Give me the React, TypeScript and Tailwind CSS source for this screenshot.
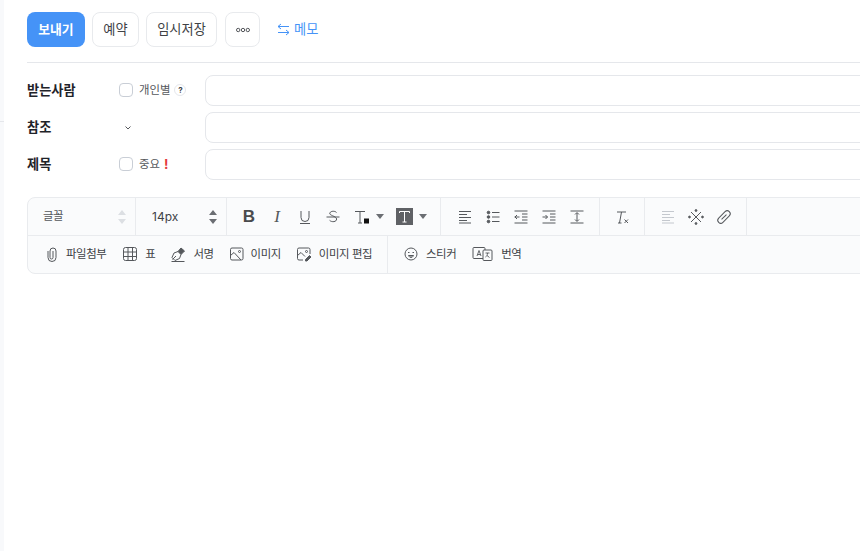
import React from "react";

const S = ({ children, w = 18, h = 18, vb = "0 0 18 18", c = "text-[#55585c]" }: { children: React.ReactNode; w?: number; h?: number; vb?: string; c?: string }) => (
  <svg width={w} height={h} viewBox={vb} fill="none" stroke="currentColor" strokeWidth="1" className={`shrink-0 ${c}`}>{children}</svg>
);

const Caret = () => (
  <svg width="8" height="5" viewBox="0 0 8 5" className="shrink-0 text-[#6b6e73]"><path d="M0 0h8L4 5z" fill="currentColor" /></svg>
);

const Stepper = ({ light }: { light?: boolean }) => (
  <svg width="8" height="16" viewBox="0 0 8 16" className={light ? "text-[#dcdfe3]" : "text-[#6b6e73]"}>
    <path d="M4 1l4 5H0zM4 15l4-5H0z" fill="currentColor" />
  </svg>
);

const Check = () => <span className="w-[14px] h-[14px] rounded-[4px] border border-[#c9ced6] bg-white shrink-0" />;

const Field = ({ label, mid }: { label: string; mid: React.ReactNode }) => (
  <div className="flex items-center h-[31px]">
    <span className="w-[92px] shrink-0 text-[13.2px] font-bold text-[#1f2329]">{label}</span>
    <div className="w-[86px] shrink-0 flex items-center">{mid}</div>
    <div className="w-[720px] shrink-0 h-[31px] rounded-[8px] border border-[#e5e7eb] bg-white" />
  </div>
);

const Tool = ({ children }: { children: React.ReactNode }) => (
  <span className="w-[28px] h-[24px] flex items-center justify-center shrink-0">{children}</span>
);

const Attach = ({ icon, label }: { icon: React.ReactNode; label: string }) => (
  <div className="flex items-center text-[11.4px] tracking-[-0.4px] text-[#404246]">
    {icon}
    <span>{label}</span>
  </div>
);

const Lines = ({ light }: { light?: boolean }) => (
  <S c={light ? "text-[#c4c8ce]" : "text-[#55585c]"}>
    <path d="M3 3.500h12M3 6.500h8M3 9.500h12M3 12.500h8M3 15h12" />
  </S>
);

export default function App() {
  return (
    <div className="w-[860px] h-[551px] overflow-hidden flex bg-white" style={{ fontFamily: '"Inter","Noto Sans CJK KR",sans-serif' }}>
      <aside className="w-[4px] shrink-0 bg-[#f8f9fb] flex flex-col">
        <div className="mt-[121px] h-px bg-[#e5e7eb]" />
      </aside>
      <main className="flex-1 min-w-0 pl-[23px] pt-[12px] overflow-hidden">
        <div className="flex items-center h-[35px]">
          <button className="w-[58px] h-[35px] rounded-[8px] bg-[#4593f7] text-white text-[12.8px] font-bold">보내기</button>
          <button className="ml-[7px] w-[47px] h-[35px] rounded-[8px] border border-[#e8eaed] text-[13.2px] text-[#404246]">예약</button>
          <button className="ml-[7px] w-[71px] h-[35px] rounded-[8px] border border-[#e8eaed] text-[13.2px] text-[#404246]">임시저장</button>
          <button className="ml-[8px] w-[35px] h-[35px] rounded-[8px] border border-[#e8eaed] flex items-center justify-center">
            <svg width="14" height="6" viewBox="0 0 14 6" fill="none" stroke="#55585c" strokeWidth="1"><circle cx="2.200" cy="3" r="1.700" /><circle cx="7" cy="3" r="1.700" /><circle cx="11.800" cy="3" r="1.700" /></svg>
          </button>
          <div className="ml-[17px] flex items-center gap-[4px] text-[13.2px] text-[#4593f7]">
            <svg width="13" height="13" viewBox="0 0 13 13" fill="none" stroke="currentColor" strokeWidth="1"><path d="M4 1L1 3.500 4 6M1 3.500h11M9 7l3 2.500L9 12M12 9.500H1" /></svg>
            <span>메모</span>
          </div>
        </div>
        <div className="mt-[15px] h-px bg-[#e5e7eb]" />
        <div className="mt-[12px] flex flex-col gap-[6px]">
          <Field label="받는사람" mid={<><Check /><span className="ml-[6px] text-[11.400px] text-[#55585c]">개인별</span><span className="ml-[4px] w-[12px] h-[12px] rounded-full border border-[#e5e7eb] flex items-center justify-center text-[8px] font-bold text-[#404246]">?</span></>} />
          <Field label="참조" mid={<svg width="6" height="4" viewBox="0 0 6 4" fill="none" stroke="#55585c" strokeWidth="1" className="ml-[6px]"><path d="M.5.5L3 3 5.500.5" /></svg>} />
          <Field label="제목" mid={<><Check /><span className="ml-[6px] text-[11.400px] text-[#55585c]">중요</span><span className="ml-[4px] text-[13px] font-bold leading-none text-[#e5393b]">!</span></>} />
        </div>
        <div className="mt-[17px] w-[900px] h-[77px] rounded-[8px] border border-[#e9ebee] bg-[#fafbfc] flex flex-col">
          <div className="h-[38px] flex border-b border-[#e9ebee] shrink-0">
            <div className="w-[108px] shrink-0 border-r border-[#e9ebee] flex items-center justify-between pl-[15px] pr-[9px] text-[11.400px] tracking-[-0.4px] text-[#55585c]"><span>글꼴</span><Stepper light /></div>
            <div className="w-[91px] shrink-0 border-r border-[#e9ebee] flex items-center justify-between pl-[16px] pr-[9px] text-[12px] text-[#404246]"><span>14px</span><Stepper /></div>
            <div className="w-[214px] shrink-0 border-r border-[#e9ebee] flex items-center pl-[8px]">
              <Tool><span className="text-[17px] font-bold leading-none text-[#4a4b4d]" style={{ fontFamily: '"Liberation Sans"' }}>B</span></Tool>
              <Tool><span className="text-[17px] italic leading-none text-[#55585c]" style={{ fontFamily: '"Liberation Serif"' }}>I</span></Tool>
              <Tool><S><path d="M5 3v6.500a4 4 0 008 0V3M4 15.500h10" /></S></Tool>
              <Tool><S><path d="M12.500 4.500C11.500 3 7 2.500 5.800 5c-1 2.500 6.500 3 6.800 6 .2 3-5 3.500-7 1.300M2.500 9h13" /></S></Tool>
              <div className="ml-[6px] flex items-center gap-[5px] w-[36px]">
                <S><path d="M2 3.500h10M7 3.500V15M5 15h4" /><rect x="11" y="10.500" width="5" height="5" fill="#111" stroke="none" /></S>
                <Caret />
              </div>
              <div className="ml-[7px] flex items-center gap-[6px]">
                <span className="w-[17px] h-[17px] bg-[#5f6165] flex items-center justify-center">
                  <svg width="13" height="13" viewBox="0 0 13 13" fill="none" stroke="#fff" strokeWidth="1"><path d="M1.500 3V1.500h10V3M6.500 1.500V12M4.500 12h4" /></svg>
                </span>
                <Caret />
              </div>
            </div>
            <div className="w-[159px] shrink-0 border-r border-[#e9ebee] flex items-center pl-[9.500px]">
              <Tool><Lines /></Tool>
              <Tool><S><circle cx="4.500" cy="4.500" r="1.300" fill="currentColor" /><circle cx="4.500" cy="9" r="1.300" fill="currentColor" /><circle cx="4.500" cy="13.500" r="1.300" fill="currentColor" /><path d="M8 4.500h7.500M8 9h7.500M8 13.500h7.500" /></S></Tool>
              <Tool><S><path d="M2.500 3h13M2.500 15h13M10 6h5.500M10 9h5.500M10 12h5.500M7.500 9h-5M5 7L3 9l2 2" /></S></Tool>
              <Tool><S><path d="M2.500 3h13M2.500 15h13M10 6h5.500M10 9h5.500M10 12h5.500M2.500 9h5M5.500 7l2 2-2 2" /></S></Tool>
              <Tool><S><path d="M2.500 3h13M2.500 15h13M9 5v8M7 6.500L9 4.500l2 2M7 11.500l2 2 2-2" /></S></Tool>
            </div>
            <div className="w-[45px] shrink-0 border-r border-[#e9ebee] flex items-center justify-center">
              <S><path d="M4 4h9M8.500 4L6.500 15M5 15h3.500M11.500 11.500l3.500 3.500M15 11.500L11.500 15" /></S>
            </div>
            <div className="w-[102px] shrink-0 border-r border-[#e9ebee] flex items-center pl-[9px]">
              <Tool><Lines light /></Tool>
              <Tool><S><path d="M4 4l10 10M14 4L4 14" /><circle cx="9" cy="2.500" r=".9" fill="currentColor" /><circle cx="9" cy="15.500" r=".9" fill="currentColor" /><circle cx="2.500" cy="9" r=".9" fill="currentColor" /><circle cx="15.500" cy="9" r=".9" fill="currentColor" /></S></Tool>
              <Tool><S><g transform="rotate(-45 9 9)"><rect x="1.500" y="6" width="15" height="6" rx="3" /><path d="M5.500 9h7" /></g></S></Tool>
            </div>
          </div>
          <div className="flex-1 flex items-center">
            <div className="w-[360px] shrink-0 h-full border-r border-[#e9ebee] flex items-center pl-[16px]">
              <Attach label="파일첨부" icon={<span className="mr-[6px] flex"><S w={16} h={16} vb="0 0 16 16"><path d="M4 5v6.500a4 4 0 008 0V5a3 3 0 00-6 0v6.500a1.500 1.500 0 003 0V5" /></S></span>} />
              <div className="ml-[16px]"><Attach label="표" icon={<span className="mr-[7px] flex"><S w={16} h={16} vb="0 0 16 16"><rect x="1.500" y="1.500" width="13" height="13" rx="2" /><path d="M1.500 6h13M1.500 10.500h13M6 1.500v13M10.500 1.500v13" /></S></span>} /></div>
              <div className="ml-[15px]"><Attach label="서명" icon={<span className="mr-[7px] flex"><S w={16} h={16} vb="0 0 16 16"><path d="M2 11.500L4 7l4-1.500 3 3L9.500 12.500 5 14.500z" /><path d="M8 5.500L11 2l3.500 3L11 8.500" fill="currentColor" /><path d="M1.500 15.500h13M2.500 13.500L6 10" /></S></span>} /></div>
              <div className="ml-[15px]"><Attach label="이미지" icon={<span className="mr-[6px] flex"><S w={16} h={16} vb="0 0 16 16"><rect x="1.500" y="2" width="12.500" height="12" rx="1.500" /><circle cx="10.500" cy="5.500" r="1" /><path d="M1.500 9.500l3.500-3 7 7.500" /></S></span>} /></div>
              <div className="ml-[15px]"><Attach label="이미지 편집" icon={<span className="mr-[7px] flex"><S w={16} h={16} vb="0 0 16 16"><path d="M7 14H3a1.500 1.500 0 01-1.500-1.500v-9A1.500 1.500 0 013 2h9.500A1.500 1.500 0 0114 3.500V8" /><circle cx="10.500" cy="5.500" r="1" /><path d="M1.500 9.500l3.500-3 4 4" /><path d="M9.500 13.500l4-4 1.500 1.500-4 4H9.500z" fill="currentColor" /></S></span>} /></div>
            </div>
            <div className="flex items-center pl-[15px]">
              <Attach label="스티커" icon={<span className="mr-[7px] flex"><S w={16} h={16} vb="0 0 16 16"><circle cx="8" cy="8" r="6" /><path d="M5 6.500h1.500M9.500 6.500H11M5.500 9.500c.8 2.500 4.200 2.500 5 0zM8 10v2" /></S></span>} />
              <div className="ml-[16px]"><Attach label="번역" icon={<span className="mr-[8px] flex"><S w={21} h={16} vb="0 0 21 16"><rect x="1" y="1.500" width="12" height="11" rx="1" /><rect x="11" y="4" width="9" height="10.500" rx="1" fill="#fafbfc" /><path d="M5 10l2-5.500L9 10M5.700 8.500h2.600M13.500 7h4M15.500 7c0 2-1 3.500-2 4M15 9.500l2.500 2" strokeWidth=".9" /></S></span>} /></div>
            </div>
          </div>
        </div>
      </main>
    </div>
  );
}
